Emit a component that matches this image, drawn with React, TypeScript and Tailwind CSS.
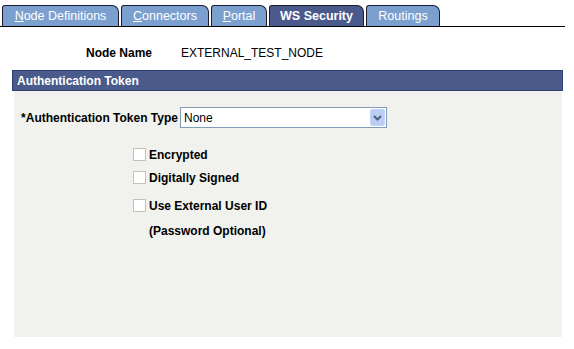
import React from 'react';

const tabs = [
  { key: 'N', rest: 'ode Definitions', w: 'w-[117px]' },
  { key: 'C', rest: 'onnectors', w: 'w-[88px]' },
  { key: 'P', rest: 'ortal', w: 'w-[56px]' },
  { key: '', rest: 'WS Security', w: 'w-[95px]', active: true },
  { key: '', rest: 'Routings', w: 'w-[74px]' },
];

const Checkbox: React.FC<{ label: string }> = ({ label }) => (
  <div className="flex items-center h-[13px]">
    <span className="w-[13px] h-[13px] border border-[#c5c2b8] bg-white shrink-0" />
    <span className="ml-[3px] font-bold text-[12px] text-black">{label}</span>
  </div>
);

export default function App() {
  return (
    <div
      className="w-[574px] h-[349px] bg-white text-black"
      style={{ fontFamily: '"Liberation Sans", Arial, sans-serif' }}
    >
      {/* Tabs */}
      <div className="pt-[5px] pl-[2px] w-[565px] flex items-end gap-[2px] border-b border-black">
        {tabs.map((t) => (
          <div
            key={t.rest}
            className={`${t.w} h-[21px] flex items-center justify-center border border-b-0 border-[#1c1c2c] rounded-tl-[3px] rounded-tr-[7px] text-[12.5px] text-white ${
              t.active ? 'bg-[#4a5a8c] font-bold' : 'bg-[#7b9fcf]'
            }`}
          >
            {t.key && <span className="underline">{t.key}</span>}
            {t.rest}
          </div>
        ))}
      </div>

      {/* Node name */}
      <div className="flex items-center h-[18px] mt-[17px] text-[12px]">
        <span className="w-[152px] text-right font-bold">Node Name</span>
        <span className="ml-[29px]">EXTERNAL_TEST_NODE</span>
      </div>

      {/* Section header */}
      <div className="ml-[12px] mt-[8px] w-[551px] h-[21px] bg-[#4a5a8a] border border-[#2c3f6e] flex items-center pl-[4px] text-[12px] font-bold text-white">
        Authentication Token
      </div>

      {/* Panel */}
      <div className="ml-[14px] w-[548px] h-[246px] bg-[#f1f2ed]">
        <div className="flex items-center pt-[16px] text-[12px]">
          <span className="w-[164px] text-right font-bold">*Authentication Token Type</span>
          <div className="ml-[2px] w-[207px] h-[21px] bg-white border border-[#7f9db9] flex items-center justify-between pl-[3px] pr-[1px]">
            <span className="text-[12px]">None</span>
            <span className="w-[15px] h-[17px] bg-[#b9cdf3] border border-[#c3d3fd] rounded-[2px] flex items-center justify-center">
              <svg width="9" height="6" viewBox="0 0 9 6">
                <path d="M1 1 L4.5 4.5 L8 1" stroke="#4d6185" strokeWidth="2" fill="none" />
              </svg>
            </span>
          </div>
        </div>

        <div className="ml-[119px] mt-[20px] flex flex-col">
          <Checkbox label="Encrypted" />
          <div className="mt-[10px]">
            <Checkbox label="Digitally Signed" />
          </div>
          <div className="mt-[15px]">
            <Checkbox label="Use External User ID" />
          </div>
          <div className="mt-[12px] ml-[16px] h-[13px] flex items-center font-bold text-[12px]">
            (Password Optional)
          </div>
        </div>
      </div>
    </div>
  );
}
